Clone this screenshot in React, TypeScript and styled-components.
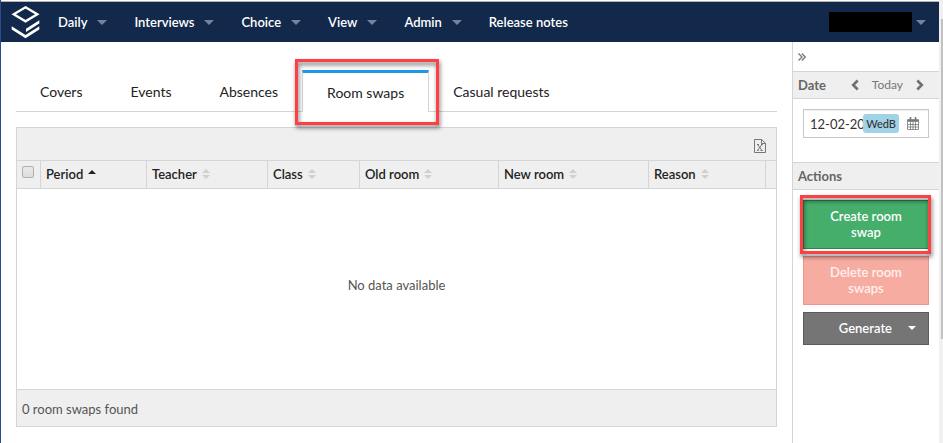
import React from "react";
import styled, { createGlobalStyle, css } from "styled-components";

const GlobalStyle = createGlobalStyle`
  *, *::before, *::after { box-sizing: border-box; }
  html, body, #root { height: 100%; }
  body {
    margin: 0;
    background: #fff;
    color: #222;
    font-family: Lato, "Liberation Sans", sans-serif;
    font-size: 13px;
    line-height: 16px;
    overflow: hidden;
  }
  button, input { font: inherit; color: inherit; }
`;

const line = "#d5d5d5";
const panel = "#efefef";

const highlight = css`
  position: relative;
  &::after {
    content: "";
    position: absolute;
    z-index: 2;
    border: 3px solid #fc4144;
    filter: drop-shadow(1px 3px 2px rgba(0, 0, 0, 0.55));
    pointer-events: none;
  }
`;

const Window = styled.div`
  display: flex;
  min-height: 100vh;
  border-left: 1px solid #2a4b8d;
`;

const Page = styled.div`
  flex: 1;
  min-width: 0;
  display: flex;
  flex-direction: column;
  padding-top: 1px;
`;

const Header = styled.header`
  display: flex;
  align-items: center;
  height: 41px;
  padding: 0 13px 0 10px;
  border-top: 1px solid #b4b4b4;
  background: #13294b;
`;

const Logo = styled.svg`
  width: 30px;
  height: 34px;
  margin-right: 17px;
`;

const Nav = styled.nav`
  display: flex;
  flex: 1;
  gap: 27px;
`;

const NavItem = styled.button`
  display: flex;
  align-items: center;
  gap: 10px;
  padding: 0;
  border: 0;
  background: none;
  color: #fff;
  font-weight: 600;
  white-space: nowrap;
`;

const NavLink = styled.a`
  color: #fff;
  font-weight: 600;
  text-decoration: none;
  white-space: nowrap;
`;

const Caret = styled.span<{ $tone: string; $size: number }>`
  border: ${(p) => p.$size}px solid transparent;
  border-top-color: ${(p) => p.$tone};
  border-bottom: 0;
`;

const Account = styled.button`
  display: flex;
  align-items: center;
  gap: 4px;
  padding: 0;
  border: 0;
  background: none;
`;

const AccountName = styled.span`
  width: 83px;
  height: 20px;
  background: #000;
`;

const Body = styled.div`
  flex: 1;
  display: flex;
`;

const Main = styled.main`
  flex: 1;
  min-width: 0;
  padding: 28px 15px 16px;
`;

const Tabs = styled.div`
  display: flex;
  align-items: stretch;
  height: 42px;
  margin-bottom: 15px;
  border-bottom: 1px solid ${line};
`;

const TabSlot = styled.div<{ $marked?: boolean }>`
  display: flex;
  height: 42px;
  ${(p) => p.$marked && highlight}
  &::after { inset: -11px -10px -13px -7px; }
`;

const Tab = styled.button<{ $active?: boolean }>`
  padding: 3px 24px 0;
  border: 0;
  border-bottom: 1px solid ${line};
  background: #fff;
  font-size: 14px;
  white-space: nowrap;
  ${(p) =>
    p.$active &&
    css`
      padding: 0 24px;
      border: 1px solid ${line};
      border-top: 3px solid #2496e8;
      border-bottom: 0;
    `}
`;

const Grid = styled.section`
  border: 1px solid ${line};
`;

const Toolbar = styled.div`
  display: flex;
  align-items: center;
  justify-content: flex-end;
  height: 32px;
  padding: 4px 10px 0;
  background: ${panel};
`;

const IconButton = styled.button`
  display: flex;
  padding: 0;
  border: 0;
  background: none;
  color: #777;
`;

const Table = styled.table`
  width: 100%;
  table-layout: fixed;
  border-collapse: separate;
  border-spacing: 0;
`;

const HeadCell = styled.th<{ $width?: number }>`
  width: ${(p) => (p.$width ? p.$width + "px" : "auto")};
  height: 29px;
  padding: 0 5px 1px;
  border: 1px solid ${line};
  border-left: 0;
  background: ${panel};
  font-weight: 600;
  text-align: left;
  white-space: nowrap;
  &:last-child { border-right: 0; }
`;

const Sort = styled.button`
  display: flex;
  align-items: center;
  gap: 5px;
  padding: 0;
  border: 0;
  background: none;
  font-weight: 600;
`;

const Check = styled.input`
  appearance: none;
  display: block;
  width: 12px;
  height: 12px;
  margin: 0 0 4px;
  border: 1px solid #b0b0b0;
  border-radius: 2px;
  background: linear-gradient(#e9e9e9, #dcdcdc);
`;

const Empty = styled.td`
  height: 200px;
  padding: 0 0 8px;
  color: #555;
  text-align: center;
`;

const Footer = styled.div`
  display: flex;
  align-items: center;
  height: 37px;
  padding: 2px 5px 0;
  border-top: 1px solid ${line};
  background: ${panel};
  color: #555;
`;

const Sidebar = styled.aside`
  width: 147px;
  border-left: 1px solid ${line};
`;

const Collapse = styled.button`
  display: flex;
  align-items: center;
  width: 100%;
  height: 29px;
  padding: 0 5px;
  border: 0;
  background: none;
  color: #777;
`;

const SideHead = styled.div`
  display: flex;
  align-items: center;
  height: 28px;
  padding: 0 15px 0 5px;
  border: 1px solid ${line};
  border-width: 1px 0;
  background: ${panel};
  color: #666;
`;

const SideTitle = styled.h2`
  flex: 1;
  margin: 0;
  font-size: 13px;
  font-weight: 700;
`;

const Pager = styled.div`
  display: flex;
  align-items: center;
  gap: 13px;
`;

const Today = styled.button`
  padding: 0;
  border: 0;
  background: none;
  color: #777;
  font-size: 12px;
`;

const DateBox = styled.div`
  display: flex;
  align-items: center;
  height: 29px;
  margin: 10px 10px 24px;
  padding: 0 9px 0 6px;
  border: 1px solid #c8c8c8;
  box-shadow: inset 0 1px 1px #eee;
`;

const DateInput = styled.input`
  flex: 1;
  width: 0;
  min-width: 0;
  padding: 0;
  border: 0;
  outline: 0;
  background: none;
  color: #333;
`;

const DayTag = styled.span`
  height: 19px;
  margin-right: 8px;
  padding: 0 3px;
  border-radius: 3px;
  background: #a0d3e8;
  color: #333;
  font-size: 11px;
  font-weight: 500;
  line-height: 20px;
`;

const Actions = styled.div`
  display: grid;
  gap: 7px;
  padding: 10px;
`;

const ActionSlot = styled.div<{ $marked?: boolean }>`
  display: grid;
  ${(p) => p.$marked && highlight}
  &::after { inset: -5px -2px -5px -3px; }
`;

const Action = styled.button<{ $fill: string; $edge: string }>`
  padding: 7px 24px 8px;
  border: 1px solid ${(p) => p.$edge};
  background: ${(p) => p.$fill};
  color: #fff;
  font-weight: 600;
  &:disabled { color: #fff0ee; }
`;

const MenuAction = styled(Action)`
  display: flex;
  align-items: center;
  justify-content: flex-end;
  gap: 16px;
  padding: 7px 12px 8px;
`;

const Track = styled.div`
  width: 4px;
  padding: 19px 0 0 2px;
  background: #f0f0f0;
`;

const Thumb = styled.div`
  height: 320px;
  background: #c1c1c1;
`;

const menus = ["Daily", "Interviews", "Choice", "View", "Admin"];
const tabs = ["Covers", "Events", "Absences", "Room swaps", "Casual requests"];
const columns = [
  { name: "Period", width: 106 },
  { name: "Teacher", width: 121 },
  { name: "Class", width: 92 },
  { name: "Old room", width: 139 },
  { name: "New room", width: 150 },
  { name: "Reason" },
];

function SortIcon({ active }: { active: boolean }) {
  return active ? (
    <svg width="8" height="12" viewBox="0 0 8 12" aria-hidden="true">
      <path d="M0 6 4 2l4 4z" fill="#222" />
    </svg>
  ) : (
    <svg width="8" height="12" viewBox="0 0 8 12" aria-hidden="true">
      <path d="M0 5 4 1l4 4zM0 7h8l-4 4z" fill="#d0d0d0" />
    </svg>
  );
}

function Chevron({ flip }: { flip?: boolean }) {
  return (
    <svg width="8" height="12" viewBox="0 0 8 12" fill="none" stroke="#707070" strokeWidth="2.6" aria-hidden="true">
      <path d={flip ? "M1.3 1.5 5.8 6l-4.5 4.5" : "M6.7 1.5 2.2 6l4.5 4.5"} />
    </svg>
  );
}

export default function App() {
  return (
    <>
      <GlobalStyle />
      <Window>
        <Page>
          <Header>
            <Logo viewBox="0 0 30 34" fill="#fff" aria-label="Logo">
              <path
                d="M14.5 2.3 26.3 9.300 14.500 16.300 2.700 9.300z"
                fill="none"
                stroke="#fff"
                strokeWidth="2.300"
              />
              <path d="M.7 21.300 14.500 30 28.300 21.300V24.600L14.500 33.300.7 24.600z" />
              <path d="M28.300 15.300V18.600L15 27V23.700z" />
            </Logo>
            <Nav>
              {menus.map((m) => (
                <NavItem key={m}>
                  {m}
                  <Caret $tone="#77839a" $size={5} />
                </NavItem>
              ))}
              <NavLink href="#release-notes">Release notes</NavLink>
            </Nav>
            <Account aria-label="Account">
              <AccountName />
              <Caret $tone="#77839a" $size={5} />
            </Account>
          </Header>
          <Body>
            <Main>
              <Tabs role="tablist">
                {tabs.map((t) => (
                  <TabSlot key={t} $marked={t === "Room swaps"}>
                    <Tab role="tab" aria-selected={t === "Room swaps"} $active={t === "Room swaps"}>
                      {t}
                    </Tab>
                  </TabSlot>
                ))}
              </Tabs>
              <Grid>
                <Toolbar>
                  <IconButton aria-label="Export to Excel">
                    <svg width="12" height="14" viewBox="0 0 12 14" fill="none" stroke="currentColor">
                      <path d="M.5.5h7.2l3.8 3.8v9.2H.5zM7.5.5v4h4" />
                      <path d="M3.6 5.5l4.3 6M7.9 5.5l-4.3 6M3 5.5h2M7 5.5h1.8M3 11.5h1.7M6.6 11.5h2" />
                    </svg>
                  </IconButton>
                </Toolbar>
                <Table>
                  <thead>
                    <tr>
                      <HeadCell $width={24}>
                        <Check type="checkbox" aria-label="Select all" />
                      </HeadCell>
                      {columns.map((c) => (
                        <HeadCell key={c.name} $width={c.width}>
                          <Sort>
                            {c.name}
                            <SortIcon active={c.name === "Period"} />
                          </Sort>
                        </HeadCell>
                      ))}
                      <HeadCell $width={10} />
                    </tr>
                  </thead>
                  <tbody>
                    <tr>
                      <Empty colSpan={8}>No data available</Empty>
                    </tr>
                  </tbody>
                </Table>
                <Footer>0 room swaps found</Footer>
              </Grid>
            </Main>
            <Sidebar>
              <Collapse aria-label="Collapse sidebar">
                <svg width="8" height="8" viewBox="0 0 8 8" fill="none" stroke="currentColor" strokeWidth="1.3">
                  <path d="M.5.5 4 4 .5 7.5M3.8.5l3.5 3.5-3.5 3.5" />
                </svg>
              </Collapse>
              <SideHead>
                <SideTitle>Date</SideTitle>
                <Pager>
                  <IconButton aria-label="Previous day"><Chevron /></IconButton>
                  <Today>Today</Today>
                  <IconButton aria-label="Next day"><Chevron flip /></IconButton>
                </Pager>
              </SideHead>
              <DateBox>
                <DateInput aria-label="Date" defaultValue="12-02-2020" />
                <DayTag>WedB</DayTag>
                <IconButton aria-label="Open calendar">
                  <svg width="12" height="13" viewBox="0 0 12 13" fill="none" stroke="currentColor">
                    <path d="M.5 2.5h11v10H.5zM.5 4.5h11M.5 7.5h11M.5 10h11M3.5 4.5v8M6 4.5v8M8.5 4.5v8" strokeWidth=".8" />
                    <path d="M.5 3.5h11" />
                    <path d="M3.5 0v3M8.5 0v3" strokeWidth="1.6" />
                  </svg>
                </IconButton>
              </DateBox>
              <SideHead>
                <SideTitle>Actions</SideTitle>
              </SideHead>
              <Actions>
                <ActionSlot $marked>
                  <Action $fill="#45ae6b" $edge="#2d8650">Create room swap</Action>
                </ActionSlot>
                <ActionSlot>
                  <Action disabled $fill="#f7aca2" $edge="#ef9488">Delete room swaps</Action>
                </ActionSlot>
                <ActionSlot>
                  <MenuAction $fill="#757575" $edge="#5c5c5c">
                    Generate
                    <Caret $tone="#fff" $size={4} />
                  </MenuAction>
                </ActionSlot>
              </Actions>
            </Sidebar>
          </Body>
        </Page>
        <Track>
          <Thumb />
        </Track>
      </Window>
    </>
  );
}
